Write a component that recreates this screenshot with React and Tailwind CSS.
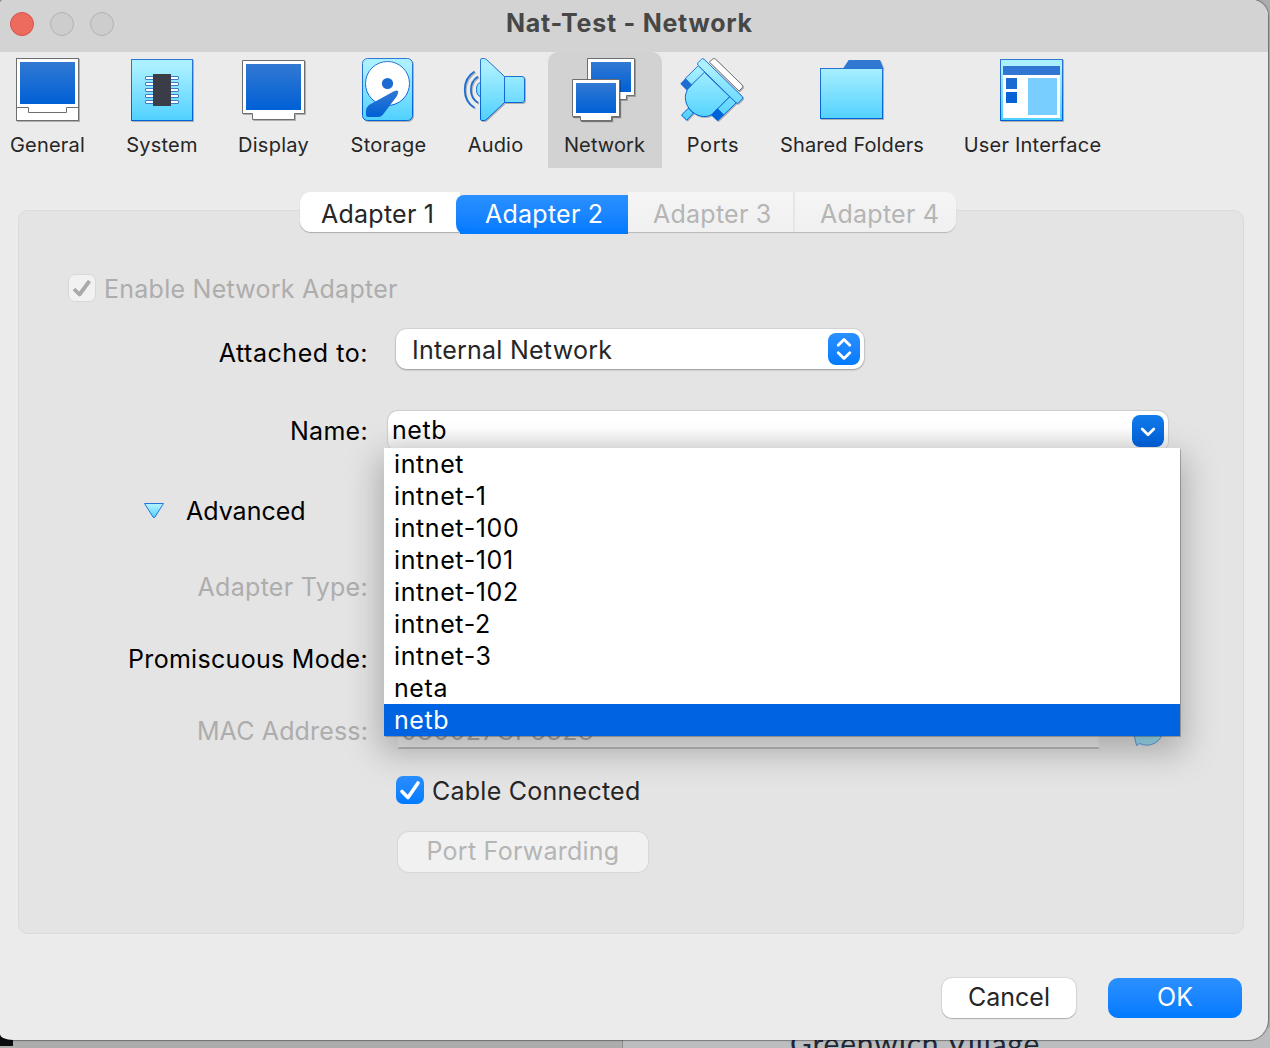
import React from "react";

function Defs() {
  return (
    <svg width="0" height="0" className="absolute">
      <defs>
        <linearGradient id="deep" x1="0" y1="0" x2="0" y2="1">
          <stop offset="0" stopColor="#3279d2" />
          <stop offset="1" stopColor="#0060d6" />
        </linearGradient>
        <linearGradient id="line" gradientUnits="userSpaceOnUse" x1="0" y1="0" x2="0" y2="66">
          <stop offset="0" stopColor="#3279d2" />
          <stop offset="0.85" stopColor="#0062d8" />
        </linearGradient>
        <linearGradient id="sky" gradientUnits="userSpaceOnUse" x1="0" y1="0" x2="0" y2="66">
          <stop offset="0.15" stopColor="#aaf0ff" />
          <stop offset="1" stopColor="#4bcfff" />
        </linearGradient>
        <linearGradient id="skySmall" x1="0" y1="0" x2="0" y2="1">
          <stop offset="0.15" stopColor="#aaf0ff" />
          <stop offset="1" stopColor="#4bcfff" />
        </linearGradient>
      </defs>
    </svg>
  );
}

function Icon({ children }) {
  return (
    <svg width="66" height="66" viewBox="0 0 66 66" className="shrink-0 overflow-visible drop-shadow-[1px_1px_0_rgba(0,0,0,0.25)]">
      {children}
    </svg>
  );
}

const GeneralIcon = () => (
  <Icon>
    <rect x="2.5" y="1.5" width="62" height="62" fill="#fff" stroke="#6e6e6e" />
    <rect x="6" y="5" width="55" height="42" fill="url(#deep)" />
    <path d="M2.5 50.5H14.5V55.5H52.5V50.5H64.5" fill="none" stroke="#6e6e6e" />
  </Icon>
);

const SystemIcon = () => (
  <Icon>
    <rect x="2.5" y="2.5" width="61" height="61" fill="url(#sky)" stroke="url(#line)" />
    {[19, 25, 31, 37, 43].map((y) => (
      <rect key={y} x="16.5" y={y + 0.5} width="33" height="3" rx="0.5" fill="#fff" stroke="#3b7cc4" />
    ))}
    <rect x="24" y="17" width="18" height="32" fill="#3a3c47" />
  </Icon>
);

const DisplayIcon = () => (
  <Icon>
    <path d="M2.5 3.5H64.5V56.5H54.5V62.5H12.5V56.5H2.5Z" fill="#fff" stroke="#6e6e6e" />
    <rect x="6" y="7" width="55" height="46" fill="url(#deep)" />
  </Icon>
);

const StorageIcon = () => (
  <Icon>
    <rect x="7.5" y="1.5" width="50" height="62" rx="5" fill="url(#sky)" stroke="url(#line)" />
    <circle cx="32.5" cy="26.5" r="22" fill="#fff" stroke="url(#line)" />
    <circle cx="32.5" cy="26.5" r="5.6" fill="#1b6bd3" />
    <path d="M43 34.3Q43.5 36 42 39L28 57.5Q26 60 23 60H13Q11 60 11 58V54Q11.3 50 14 48L38.5 34.6Q42.3 32.8 43 34.3Z" fill="url(#deep)" />
  </Icon>
);

const AudioIcon = () => (
  <Icon>
    <path d="M12.5 14.5C-0.5 22.5-0.5 43 12.5 50.8M16 19.5C6.5 25.5 6.5 40 16 45.8" fill="none" stroke="#1c6fd8" strokeWidth="1.8" />
    <path d="M18.5 25.5Q14.5 26.5 14.5 32.5T18.5 39.5" fill="url(#sky)" stroke="url(#line)" />
    <path d="M42.5 19.5H60Q62.5 19.5 62.5 22V43Q62.5 45.5 60 45.5H42.5Z" fill="url(#sky)" stroke="url(#line)" />
    <path d="M18.5 3Q18.5 1.5 20 1.5H22Q23.5 1.5 25 3L42.5 19.5V45.5L25 62Q23.5 63.5 22 63.5H20Q18.5 63.5 18.5 62Z" fill="url(#sky)" stroke="url(#line)" />
  </Icon>
);

const NetworkIcon = () => (
  <Icon>
    <path d="M15.5 1.5H62.5V38.5H54.5V42.5H15.5Z" fill="#fff" stroke="#6e6e6e" />
    <rect x="19" y="5" width="40" height="30" fill="url(#deep)" />
    <g className="drop-shadow-[1px_1px_0_rgba(0,0,0,0.25)]">
      <path d="M0.5 22.5H47.5V59.5H39.5V63.5H8.5V59.5H0.5Z" fill="#fff" stroke="#6e6e6e" />
    </g>
    <rect x="4" y="26" width="40" height="30" fill="url(#deep)" />
  </Icon>
);

const PortsIcon = () => (
  <Icon>
    <path d="M29.3 5L32.8 2Q34 1 35.4 2L62.2 28Q63.2 29.5 62.2 30.7L59 34Z" fill="#fff" stroke="#6e6e6e" />
    <g stroke="url(#line)" fill="url(#sky)">
      <path d="M18.3 8.7L25 15.3L11.6 28L5 21.7Z" />
      <path d="M50 39.5L56.3 45.7L43.7 58L37.3 51.7Z" />
      <path d="M8.3 51.3L13.3 56.2L6.7 63.3L1.5 58Z" />
      <path d="M24.3 15.3L49.5 39.7L35.5 54C31 60.5 22 61 15.5 57C8 53 4.5 45 5.5 38Q6.5 32 10.5 29Z" />
      <path d="M21.5 2.2Q22.7 1 24 2.2L62.3 39.5Q63.3 40.8 62.2 42L58.5 45.8Q57.2 46.8 56 45.7L17.8 8Q17 6.8 18 5.7Z" />
    </g>
    <path d="M5.5 21.3L12 28L6.7 33.3L0.3 26.7Z" fill="#1f6dd2" />
    <path d="M37.3 51.3L44 58L37.7 64.3L31 58Z" fill="#0062d8" />
  </Icon>
);

const FoldersIcon = () => (
  <Icon>
    <path d="M24 11.5L29.7 3H61L64.5 11.5Z" fill="#3078d2" />
    <rect x="1.5" y="11.5" width="62" height="50" fill="url(#sky)" stroke="url(#line)" />
  </Icon>
);

const InterfaceIcon = () => (
  <Icon>
    <rect x="1.5" y="2.5" width="62" height="61" fill="url(#sky)" stroke="url(#line)" />
    <rect x="4" y="9" width="57" height="52" fill="#fff" />
    <rect x="4" y="9" width="57" height="9" fill="#3076d2" />
    <rect x="7" y="21" width="11" height="11" fill="#1c6bd3" />
    <rect x="7" y="35" width="11" height="11" fill="#0762d5" />
    <rect x="29" y="21" width="29" height="37" fill="#78cfff" />
  </Icon>
);

function Tool({ label, className, text = "tracking-[0.2px]", active, children }) {
  return (
    <div className={`flex h-[116px] shrink-0 flex-col items-center pt-[5px] ${active ? "rounded-t-[10px] bg-[#d2d2d2]" : ""} ${className}`}>
      {children}
      <span className={`mt-[8px] text-[20px] leading-7 whitespace-nowrap text-[#262626] ${text}`}>{label}</span>
    </div>
  );
}

function Label({ children, muted, tracking = "tracking-[0.3px]" }) {
  return (
    <span className={`w-[349px] shrink-0 text-right whitespace-nowrap ${muted ? "text-[#adadad]" : "text-black"} ${tracking}`}>
      {children}
    </span>
  );
}

const networks = ["intnet", "intnet-1", "intnet-100", "intnet-101", "intnet-102", "intnet-2", "intnet-3", "neta", "netb"];

function NetworkMenu() {
  return (
    <ul className="absolute top-[37px] left-[-4px] z-10 w-[796px] bg-white tracking-[0.6px] text-black shadow-[0_0_1px_0.5px_rgba(0,0,0,0.25),0_12px_32px_4px_rgba(0,0,0,0.26)]">
      {networks.map((name) => (
        <li key={name} className={`flex h-8 items-center pl-[10px] ${name === "netb" ? "bg-[#0063e1] text-white" : ""}`}>
          {name}
        </li>
      ))}
    </ul>
  );
}

export default function App() {
  return (
    <div className="relative h-[1048px] w-[1270px] overflow-hidden bg-[#adadad] font-['Inter',sans-serif] text-[25px] leading-8 tracking-[0.25px]">
      <Defs />
      <div className="absolute bottom-0 left-0 flex h-[20px] w-full">
        <div className="h-[18px] w-[13px] bg-[#0a0c10]" />
        <div className="w-[610px] border-r border-[#8d8d8d] bg-[#acacac]" />
        <div className="flex-1 overflow-hidden bg-[#bcbdbe] pl-[167px] font-['Lato',sans-serif] text-[30px] leading-[30px] tracking-[0.8px] whitespace-nowrap text-[#202838]">
          Greenwich Village
        </div>
      </div>

      <main className="relative flex h-[1040px] w-[1268px] flex-col overflow-hidden rounded-tl-[4px] rounded-tr-[16px] rounded-br-[20px] rounded-bl-[13px_6px] bg-[#ebebeb] shadow-[0_0_1px_1px_rgba(0,0,0,0.35)]">
        <header className="flex h-[52px] shrink-0 items-center bg-[#d3d3d3] pl-[10px]">
          <div className="flex w-[104px] gap-4 pb-1">
            <i className="size-6 rounded-full border border-[#d4534b] bg-[#ed6a5e]" />
            <i className="size-6 rounded-full border border-[#b3b3b3] bg-[#cdcdcd]" />
            <i className="size-6 rounded-full border border-[#b3b3b3] bg-[#cdcdcd]" />
          </div>
          <h1 className="ml-[392px] pb-[6px] font-bold tracking-[0.75px] whitespace-nowrap text-[#474747]">Nat-Test - Network</h1>
        </header>

        <nav className="flex h-[116px] shrink-0">
          <Tool label="General" className="w-[94px]" text="pl-px tracking-[0.2px]"><GeneralIcon /></Tool>
          <Tool label="System" className="ml-4 w-[104px]"><SystemIcon /></Tool>
          <Tool label="Display" className="ml-2 w-[102px]" text="pl-px tracking-[0.25px]"><DisplayIcon /></Tool>
          <Tool label="Storage" className="ml-[10px] w-[108px]" text="pl-px tracking-[0.3px]"><StorageIcon /></Tool>
          <Tool label="Audio" className="ml-[9px] w-[88px]" text="pl-px tracking-[0.2px]"><AudioIcon /></Tool>
          <Tool label="Network" className="ml-[9px] w-[114px]" text="pr-px tracking-[0.1px]" active><NetworkIcon /></Tool>
          <Tool label="Ports" className="ml-[8px] w-[86px]" text="tracking-[0.6px]"><PortsIcon /></Tool>
          <Tool label="Shared Folders" className="ml-2 w-[176px]" text="tracking-[0.1px]"><FoldersIcon /></Tool>
          <Tool label="User Interface" className="ml-2 w-[168px]" text="pl-px tracking-[0.2px]"><InterfaceIcon /></Tool>
        </nav>

        <section className="mt-[42px] ml-[18px] h-[724px] w-[1226px] shrink-0 rounded-[10px] border border-[#dadada] bg-[#e4e4e4]">
          <div className="-mt-[19px] ml-[281px] flex h-[42px] w-[656px]">
            <div className="flex h-[40px] w-[160px] items-center rounded-l-[11px] bg-white pt-[3px] pl-[21px] text-[#262626] shadow-[0_1px_1px_rgba(0,0,0,0.25)]">
              Adapter 1
            </div>
            <div className="relative z-[1] -ml-[4px] mt-[3px] flex h-[39px] w-[172px] items-center rounded-tl-[8px] rounded-bl-[8px_10px] bg-gradient-to-b from-[#2a90ff] to-[#007aff] pb-px pl-[29px] text-white after:absolute after:bottom-0 after:left-1 after:h-[5px] after:w-3 after:bg-[#027bff]">
              Adapter 2
            </div>
            <div className="flex h-[40px] flex-1 rounded-r-[11px] bg-gradient-to-b from-[#f5f5f5] to-[#f0f0f0] text-[#b5b5b5] shadow-[0_1px_1px_rgba(0,0,0,0.2)]">
              <div className="flex w-[167px] items-center border-r-2 border-[#e6e6e6] pt-[3px] pl-[25px]">Adapter 3</div>
              <div className="flex items-center pt-[3px] pl-[25px]">Adapter 4</div>
            </div>
          </div>

          <div className="mt-[40px] ml-[49px] flex h-7 items-center text-[#adadad]">
            <span className="grid size-7 place-items-center rounded-[7px] border border-[#d8d8d8] bg-[#f1f1f1]">
              <svg width="20" height="20" viewBox="0 0 20 20"><path d="M2 11L7.5 16.5L17.5 3" fill="none" stroke="#a9a9a9" strokeWidth="3.8" strokeLinejoin="round" /></svg>
            </span>
            <span className="ml-2 pt-[2px]">Enable Network Adapter</span>
          </div>

          <div className="mt-[27px] flex h-[41px]">
            <div className="pt-2"><div className="flex"><Label tracking="tracking-[0.55px]">Attached to:</Label></div></div>
            <div className="ml-[28px] flex h-10 w-[468px] items-center justify-between rounded-[11px] bg-white pr-1 pl-4 text-[#262626] shadow-[0_0_1px_1px_rgba(0,0,0,0.07),0_1px_2px_rgba(0,0,0,0.28)]">
              <span className="pt-[2px]">Internal Network</span>
              <span className="grid size-8 place-items-center rounded-[8px] bg-gradient-to-b from-[#2a90ff] to-[#007aff]">
                <svg width="32" height="32" viewBox="0 0 32 32"><path d="M10.2 12.3L16 6.5L21.8 12.3M10.2 19.7L16 25.5L21.8 19.7" fill="none" stroke="#fff" strokeWidth="2.8" strokeLinecap="round" strokeLinejoin="round" /></svg>
              </span>
            </div>
          </div>

          <div className="mt-[41px] flex h-10">
            <div className="pt-[4px]"><div className="flex"><Label>Name:</Label></div></div>
            <div className="relative ml-5 flex w-[780px] items-start justify-between rounded-[10px] bg-gradient-to-b from-white from-40% to-[#e8e8e8] pt-1 pr-1 pl-[4px] text-black shadow-[0_0_1px_1px_rgba(0,0,0,0.1)]">
              <span className="-mt-px tracking-[0.6px]">netb</span>
              <span className="size-8 rounded-[8px] bg-gradient-to-b from-[#137bea] to-[#0060dc]">
                <svg width="32" height="32" viewBox="0 0 32 32"><path d="M10.2 14L16 19.7L21.8 14" fill="none" stroke="#fff" strokeWidth="2.8" strokeLinecap="round" strokeLinejoin="round" /></svg>
              </span>
              <NetworkMenu />
            </div>
          </div>

          <div className="mt-[44px] ml-[124px] flex h-8 items-center tracking-normal text-black">
            <svg width="22" height="18" viewBox="0 0 22 18"><path d="M1.5 1.5H20.5L12 15Q11 16.3 10 15Z" fill="url(#skySmall)" stroke="#2376d8" strokeLinejoin="round" /></svg>
            <span className="ml-[21px]">Advanced</span>
          </div>

          <div className="mt-[44px] flex h-8"><Label muted>Adapter Type:</Label></div>
          <div className="mt-10 flex h-8"><Label>Promiscuous Mode:</Label></div>
          <div className="mt-10 flex h-8">
            <Label muted tracking="tracking-[0.15px]">MAC Address:</Label>
            <div className="ml-[29px] flex h-[34px] w-[703px] border-2 border-t-0 border-[#e8e8e8] border-b-[#bcbcbc] bg-[#efefef] pl-[2px] tracking-[0.5px] text-[#adadad]">
              080027CF6328
            </div>
            <svg width="34" height="34" viewBox="0 0 34 34" className="ml-[31px]"><path d="M2 15L5.5 30.5L8.5 28.5Q17 32 24 28Q31 24 32 15A15 14 0 0 0 2 15Z" fill="#9cdff5" stroke="#5d9fe0" /></svg>
          </div>

          <div className="mt-[29px] ml-[377px] flex h-7 items-center text-[#262626]">
            <span className="grid size-7 place-items-center rounded-[7px] bg-gradient-to-b from-[#2a90ff] to-[#007aff]">
              <svg width="22" height="22" viewBox="0 0 22 22"><path d="M3 12.5L9 18.5L19 4" fill="none" stroke="#fff" strokeWidth="3.6" strokeLinecap="round" strokeLinejoin="round" /></svg>
            </span>
            <span className="ml-2 pt-[2px]">Cable Connected</span>
          </div>

          <button className="mt-[28px] ml-[379px] flex h-10 w-[250px] items-center justify-center rounded-[11px] bg-[#f1f1f1] pb-[2px] text-[#b5b5b5] shadow-[0_0_1px_1px_rgba(0,0,0,0.06)]">
            Port Forwarding
          </button>
        </section>

        <footer className="mt-[44px] mr-[26px] flex h-10 justify-end gap-8">
          <button className="w-[134px] rounded-[10px] bg-white pb-[2px] tracking-normal text-[#262626] shadow-[0_0_1px_1px_rgba(0,0,0,0.08),0_1px_1px_rgba(0,0,0,0.2)]">Cancel</button>
          <button className="w-[134px] rounded-[10px] bg-gradient-to-b from-[#2a90ff] to-[#007aff] pb-[2px] tracking-normal text-white">OK</button>
        </footer>
      </main>
    </div>
  );
}
